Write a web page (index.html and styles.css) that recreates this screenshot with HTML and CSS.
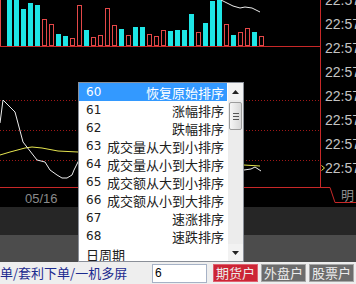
FILE: index.html
```html
<!DOCTYPE html>
<html>
<head>
<meta charset="utf-8">
<link rel="stylesheet" href="styles.css">
</head>
<body>
<div class="screen">
  <div class="chart-row">
    <svg class="chart" width="320" height="187" viewBox="0 0 320 187">
      <g class="grid">
        <line x1="0" y1="100.5" x2="320" y2="100.5"/>
        <line x1="0" y1="130.5" x2="320" y2="130.5"/>
        <line x1="0" y1="160.5" x2="320" y2="160.5"/>
      </g>
      <g class="up">
        <rect x="7" y="0" width="5" height="46"/>
        <rect x="14" y="0" width="5" height="46"/>
        <rect x="21" y="9" width="5" height="37"/>
        <rect x="28" y="3" width="5" height="43"/>
        <rect x="35" y="5" width="5" height="41"/>
        <rect x="56" y="34" width="5" height="12"/>
        <rect x="63" y="36" width="5" height="10"/>
        <rect x="84" y="30" width="5" height="16"/>
        <rect x="119" y="29" width="5" height="17"/>
        <rect x="133" y="27" width="5" height="19"/>
        <rect x="140" y="27" width="5" height="19"/>
        <rect x="168" y="31" width="5" height="15"/>
        <rect x="175" y="30" width="5" height="16"/>
        <rect x="182" y="30" width="5" height="16"/>
        <rect x="189" y="14" width="5" height="32"/>
        <rect x="203" y="23" width="5" height="23"/>
        <rect x="210" y="1" width="5" height="45"/>
        <rect x="217" y="0" width="5" height="46"/>
        <rect x="231" y="35" width="5" height="11"/>
        <rect x="252" y="32" width="5" height="14"/>
      </g>
      <g class="down">
        <rect x="-4.5" y="-1" width="5" height="47"/>
        <rect x="42.5" y="19.5" width="4" height="26"/>
        <rect x="49.5" y="24.5" width="4" height="21"/>
        <rect x="70.5" y="38.5" width="4" height="7"/>
        <rect x="77.5" y="5.5" width="4" height="40"/>
        <rect x="91.5" y="37.5" width="4" height="8"/>
        <rect x="98.5" y="35.5" width="4" height="10"/>
        <rect x="105.5" y="8.5" width="4" height="37"/>
        <rect x="112.5" y="25.5" width="4" height="20"/>
        <rect x="126.5" y="35.5" width="4" height="10"/>
        <rect x="147.5" y="34.5" width="4" height="11"/>
        <rect x="154.5" y="36.5" width="4" height="9"/>
        <rect x="161.5" y="30.5" width="4" height="15"/>
        <rect x="196.5" y="32.5" width="4" height="13"/>
        <rect x="224.5" y="24.5" width="4" height="21"/>
        <rect x="238.5" y="32.5" width="4" height="13"/>
        <rect x="245.5" y="28.5" width="4" height="17"/>
        <rect x="259.5" y="36.5" width="4" height="9"/>
      </g>
      <line class="base" x1="0" y1="46.5" x2="320" y2="46.5"/>
      <polyline class="price" points="221,0 233,6 240,8 245,7 252,8 260,12"/>
      <polyline class="avg" points="0,155 10,152 25,148 32,147 42,148 58,151 78,152"/>
      <polyline class="price" points="0,123 3,100 15,112 23,142 37,160 45,162 50,170 57,175 62,178 67,178 72,175 74,170 79,160"/>
      <polyline class="avg" points="244,165 260,166"/>
      <polyline class="price" points="244,170 251,169 255,167 261,171"/>
    </svg>
    <div class="axis">
      <div class="tick first">22:57</div>
      <div class="tick">22:57</div>
      <div class="tick">22:57</div>
      <div class="tick">22:57</div>
      <div class="tick">22:57</div>
      <div class="tick">22:57</div>
      <div class="tick">22:57</div>
      <div class="tick current"><svg class="marker" width="4" height="6" viewBox="0 0 4 6"><polyline points="0.5,0.5 3.5,3 0.5,5.5"/></svg>22:57</div>
    </div>
  </div>
  <div class="time-row">
    <div class="date-area"><span class="date">05/16</span></div>
    <div class="tab-area">
      <svg class="tab-line" width="36" height="20" viewBox="0 0 36 20"><polyline points="0,0.5 10,0.5 15,15.5 36,15.5"/></svg>
      <span class="tab-text">明</span>
    </div>
  </div>
  <div class="panel-dark"></div>
  <div class="panel-grey"></div>
  <div class="toolbar">
    <span class="tool-label">单/套利下单/一机多屏</span>
    <div class="num-input">6</div>
    <div class="btns">
      <span class="btn active">期货户</span>
      <span class="btn">外盘户</span>
      <span class="btn">股票户</span>
    </div>
  </div>

  <div class="popup">
    <div class="list">
      <div class="row selected"><span class="no">60</span><span class="name">恢复原始排序</span></div>
      <div class="row"><span class="no">61</span><span class="name">涨幅排序</span></div>
      <div class="row"><span class="no">62</span><span class="name">跌幅排序</span></div>
      <div class="row"><span class="no">63</span><span class="name">成交量从大到小排序</span></div>
      <div class="row"><span class="no">64</span><span class="name">成交量从小到大排序</span></div>
      <div class="row"><span class="no">65</span><span class="name">成交额从大到小排序</span></div>
      <div class="row"><span class="no">66</span><span class="name">成交额从小到大排序</span></div>
      <div class="row"><span class="no">67</span><span class="name">速涨排序</span></div>
      <div class="row"><span class="no">68</span><span class="name">速跌排序</span></div>
      <div class="row"><span class="plain">日周期</span></div>
    </div>
    <div class="scrollbar">
      <div class="sb-btn"><svg width="7" height="4" viewBox="0 0 7 4"><polygon points="0,4 3.5,0 7,4"/></svg></div>
      <div class="sb-track">
        <div class="sb-thumb"><span></span><span></span><span></span></div>
      </div>
      <div class="sb-btn"><svg width="7" height="4" viewBox="0 0 7 4"><polygon points="0,0 7,0 3.5,4"/></svg></div>
    </div>
  </div>
</div>
</body>
</html>
```
FILE: styles.css
```css
* { box-sizing: border-box; }
html, body { margin: 0; padding: 0; background: #000; }
body { width: 356px; height: 284px; overflow: hidden; }

.screen {
  position: relative;
  width: 356px;
  height: 284px;
  display: flex;
  flex-direction: column;
  background: #000;
  font-family: "Liberation Sans", "Noto Sans CJK SC", sans-serif;
}

.chart-row { display: flex; height: 187px; }
.chart { display: block; flex: none; }
.chart .grid line { stroke: #a01818; stroke-width: 1; stroke-dasharray: 1 2; }
.chart .up rect { fill: #1ee6e6; }
.chart .down rect { fill: none; stroke: #e44848; stroke-width: 1; }
.chart .base { stroke: #c82828; stroke-width: 1; }
.chart .price { fill: none; stroke: #ececec; stroke-width: 1; }
.chart .avg { fill: none; stroke: #e6e650; stroke-width: 1; }

.axis {
  flex: 1;
  border-left: 1px solid #c82828;
  overflow: hidden;
  padding-left: 4px;
}
.tick {
  height: 24px;
  line-height: 24px;
  font-size: 14px;
  color: #c4c4c4;
  white-space: nowrap;
}
.tick.first { margin-top: -12px; }
.tick.current { margin-left: -4px; display: flex; align-items: center; }
.marker { flex: none; }
.marker polyline { fill: none; stroke: #e6e650; stroke-width: 1; }

.time-row { display: flex; height: 20px; }
.date-area {
  width: 320px;
  border-top: 1px solid #c82828;
  padding-left: 25px;
  line-height: 19px;
}
.date { font-size: 13px; color: #8a8a8a; }
.tab-area { position: relative; flex: 1; overflow: hidden; }
.tab-line { position: absolute; left: 0; top: 0; }
.tab-line polyline { fill: none; stroke: #c82828; stroke-width: 1; }
.tab-text {
  position: absolute;
  left: 21px;
  top: 0;
  font-family: "Noto Sans CJK SC", sans-serif;
  font-size: 13px;
  line-height: 16px;
  color: #8e8e8e;
}

.panel-dark { height: 28px; background: #262626; }
.panel-grey { height: 27px; background: #4c4c4c; }

.toolbar {
  height: 22px;
  background: #eeeeee;
  display: flex;
  align-items: center;
}
.tool-label {
  width: 152px;
  font-family: "Noto Sans CJK SC", sans-serif;
  font-size: 13px;
  line-height: 18px;
  color: #1c2a8e;
  white-space: nowrap;
  overflow: hidden;
}
.num-input {
  width: 55px;
  height: 19px;
  background: #fff;
  border: 1px solid #a6b2c6;
  font-size: 12px;
  line-height: 17px;
  padding-left: 2px;
  color: #000;
}
.btns { display: flex; gap: 3px; margin-left: 6px; }
.btn {
  width: 45px;
  height: 18px;
  background: #6c6c6c;
  border: 1px solid #a8a8a8;
  color: #ececec;
  font-family: "Noto Sans CJK SC", sans-serif;
  font-size: 13px;
  line-height: 16px;
  text-align: center;
}
.btn.active { background: #cc2535; border-color: #e06070; }

.popup {
  position: absolute;
  left: 78px;
  top: 82px;
  width: 166px;
  height: 180px;
  border: 1px solid #8a8f98;
  background: #fff;
  display: flex;
  overflow: hidden;
}
.list { width: 148px; flex: none; }
.row {
  height: 18px;
  display: flex;
  align-items: center;
  padding: 0 3px 0 7px;
  color: #202020;
  white-space: nowrap;
}
.row.selected { background: #3399ff; color: #fff; }
.no { font-family: "DejaVu Sans", sans-serif; font-size: 12px; width: 20px; flex: none; }
.name {
  flex: 1;
  text-align: right;
  font-family: "Noto Sans CJK SC", sans-serif;
  font-size: 13px;
}
.plain { font-family: "Noto Sans CJK SC", sans-serif; font-size: 13px; }

.scrollbar {
  flex: 1;
  margin-left: 1px;
  display: flex;
  flex-direction: column;
  background: #ececec;
}
.sb-btn {
  height: 17px;
  display: flex;
  align-items: center;
  justify-content: center;
  background: #f2f2f2;
}
.sb-btn polygon { fill: #222; }
.sb-track { flex: 1; padding-top: 2px; }
.sb-thumb {
  margin: 0 1px;
  height: 28px;
  border: 1px solid #9c9c9c;
  border-radius: 2px;
  background: linear-gradient(to right, #f6f6f6, #e4e4e4 60%, #d8d8d8);
  display: flex;
  flex-direction: column;
  align-items: center;
  justify-content: center;
  gap: 2px;
}
.sb-thumb span { width: 6px; height: 1px; background: #555; display: block; }
```
